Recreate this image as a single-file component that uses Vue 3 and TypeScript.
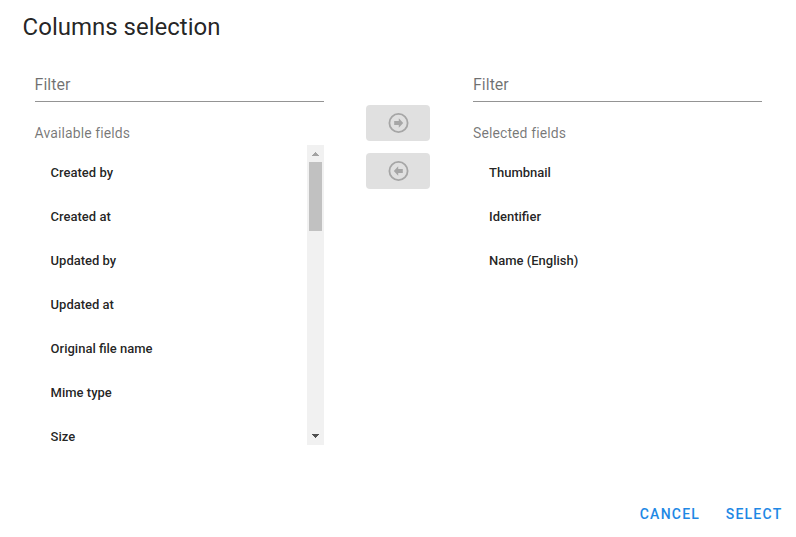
<script setup lang="ts">
import { ref } from 'vue'

const available = ref<string[]>(['Created by', 'Created at', 'Updated by', 'Updated at', 'Original file name', 'Mime type', 'Size'])
const selected = ref<string[]>(['Thumbnail', 'Identifier', 'Name (English)'])
</script>

<template>
  <main class="dialog">
    <h1 class="title">Columns selection</h1>
    <div class="content">
      <section class="panel available">
        <div class="filter">Filter</div>
        <div class="caption">Available fields</div>
        <div class="scroller">
          <ul class="list">
            <li v-for="name in available" :key="name" class="item">{{ name }}</li>
          </ul>
          <div class="scrollbar">
            <svg class="arrow" viewBox="0 0 17 17" shape-rendering="crispEdges"><path d="M5 11h7v-1h-1V9h-1V8H9V7H8v1H7v1H6v1H5z" fill="#a3a3a3" /></svg>
            <div class="thumb"></div>
            <svg class="arrow" viewBox="0 0 17 17" shape-rendering="crispEdges"><path d="M5 6h7v1h-1v1h-1v1H9v1H8V9H7V8H6V7H5z" fill="#505050" /></svg>
          </div>
        </div>
      </section>
      <div class="moves">
        <button class="move" disabled aria-label="Add">
          <svg viewBox="0 0 24 24"><circle cx="12.5" cy="12" r="9.1" /><path d="M8.2 10h4.6V7.3L17.2 12l-4.4 4.7V14H8.2z" /></svg>
        </button>
        <button class="move" disabled aria-label="Remove">
          <svg viewBox="0 0 24 24"><circle cx="12.5" cy="12" r="9.1" /><path d="M16.8 10h-4.6V7.3L7.8 12l4.4 4.7V14h4.6z" /></svg>
        </button>
      </div>
      <section class="panel">
        <div class="filter">Filter</div>
        <div class="caption">Selected fields</div>
        <ul class="list">
          <li v-for="name in selected" :key="name" class="item">{{ name }}</li>
        </ul>
      </section>
    </div>
    <footer class="actions">
      <button class="action">Cancel</button>
      <button class="action">Select</button>
    </footer>
  </main>
</template>

<style>
body {
  background: #fff;
}
</style>

<style scoped>
.dialog {
  box-sizing: border-box;
  width: 796px;
  height: 537px;
  display: flex;
  flex-direction: column;
  overflow: hidden;
  background: #fff;
  color: rgba(0, 0, 0, 0.87);
  font-family: Roboto, sans-serif;
}
.title {
  margin: 0;
  padding: 11px 22.6px 0;
  font-size: 24px;
  line-height: 32px;
  font-weight: 400;
  letter-spacing: 0;
}
.content {
  display: flex;
  padding: 26px 34px 0 35px;
}
.panel {
  width: 289px;
}
.filter {
  height: 32px;
  border-bottom: 1px solid #949494;
  font-size: 16px;
  line-height: 32px;
  color: rgba(0, 0, 0, 0.56);
}
.available .filter,
.available .caption,
.available .item {
  text-indent: -0.4px;
}
.caption {
  margin-top: 21px;
  height: 22px;
  font-size: 14px;
  line-height: 20px;
  letter-spacing: 0.1px;
  color: rgba(0, 0, 0, 0.54);
}
.scroller {
  display: flex;
  height: 300px;
  overflow: hidden;
}
.list {
  flex: 1;
  margin: 0;
  padding: 6px 0 0;
  list-style: none;
}
.item {
  height: 44px;
  padding-left: 16px;
  font-size: 13px;
  line-height: 44px;
  font-weight: 500;
}
.scrollbar {
  width: 17px;
  display: flex;
  flex-direction: column;
  background: #f1f1f1;
}
.arrow {
  width: 17px;
  height: 17px;
}
.thumb {
  height: 69px;
  margin: 0 2px auto;
  background: #c1c1c1;
}
.moves {
  display: flex;
  flex-direction: column;
  gap: 12px;
  width: 64px;
  padding: 36px 43px 0 42px;
}
.move {
  display: flex;
  align-items: center;
  justify-content: center;
  height: 36px;
  padding: 0;
  border: 0;
  border-radius: 4px;
  background: #e0e0e0;
}
.move svg {
  width: 24px;
  height: 24px;
  fill: #a6a6a6;
}
.move circle {
  fill: none;
  stroke: #a6a6a6;
  stroke-width: 1.8;
}
.actions {
  display: flex;
  justify-content: flex-end;
  gap: 25.5px;
  margin-top: auto;
  padding: 0 13.5px 5px 0;
}
.action {
  height: 36px;
  padding: 0;
  border: 0;
  background: none;
  color: #1e88e5;
  font: 500 14px/36px Roboto, sans-serif;
  letter-spacing: 1.25px;
  text-transform: uppercase;
}
</style>
